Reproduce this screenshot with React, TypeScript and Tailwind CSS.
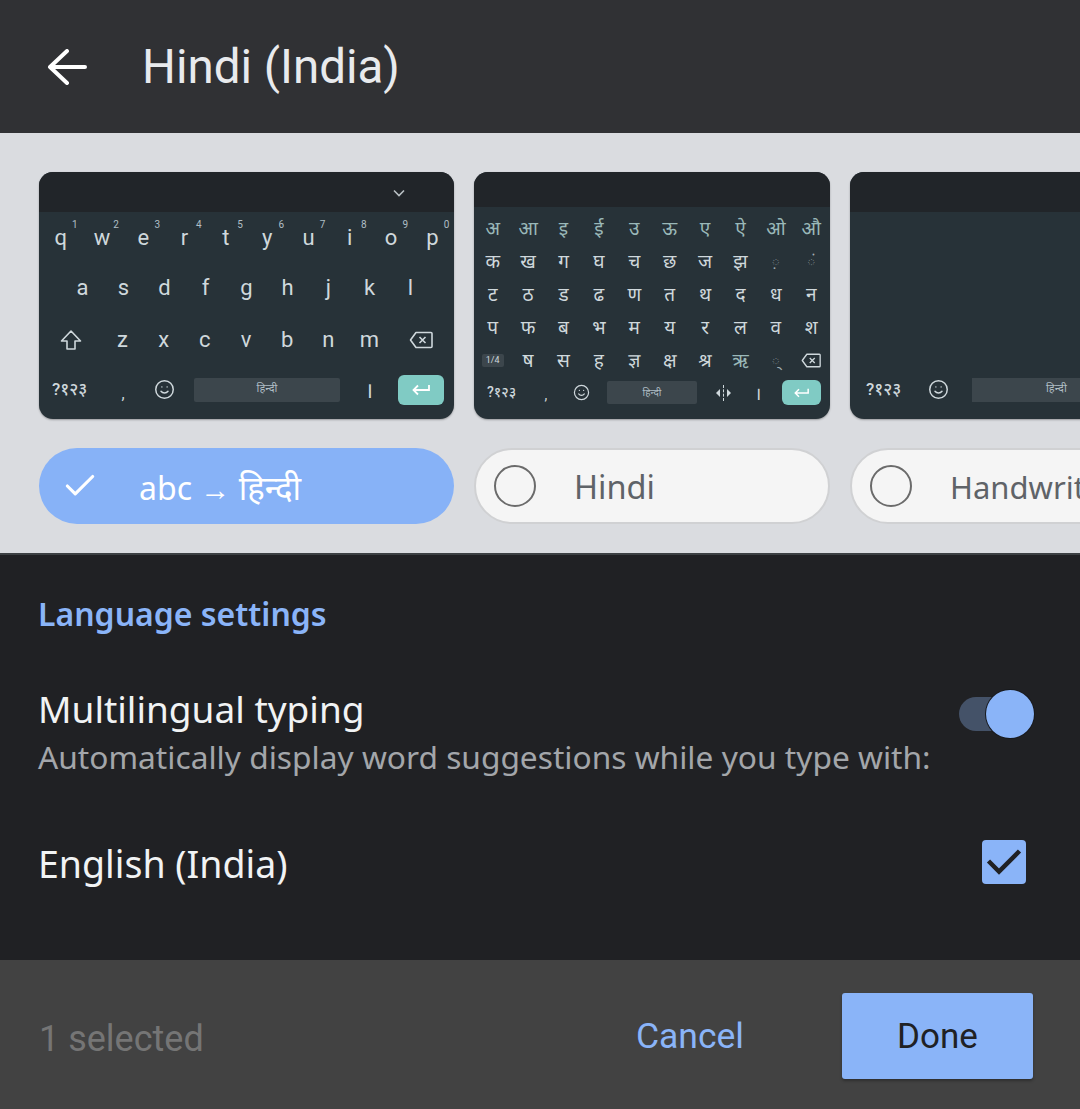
import { Check, Smile } from "lucide-react";

const font = "font-['Noto_Sans','Noto_Sans_Devanagari','Liberation_Sans',sans-serif]";
const roboto = "font-['Roboto','Noto_Sans_Devanagari','Noto_Sans',sans-serif]";
const keyFont = roboto;

function Backspace({ className }: { className: string }) {
  return (
    <svg viewBox="0 0 24 18" fill="none" stroke="currentColor" strokeWidth="1.6" className={className}>
      <path d="M7 1.5h15a1 1 0 0 1 1 1v13a1 1 0 0 1-1 1H7L1.5 9z" strokeLinejoin="round" />
      <path d="M10.5 6l6 6M16.5 6l-6 6" />
    </svg>
  );
}

function Shift() {
  return (
    <svg viewBox="0 0 22 22" fill="none" stroke="currentColor" strokeWidth="1.6" className="w-[22px] h-[22px]">
      <path d="M11 2L1.5 12H7v8h8v-8h5.5z" strokeLinejoin="round" />
    </svg>
  );
}

function Enter({ className }: { className: string }) {
  return (
    <svg viewBox="0 0 18 12" fill="none" stroke="currentColor" strokeWidth="1.8" className={className}>
      <path d="M17 1v5H2M6 1.5L1.5 6 6 10.5" />
    </svg>
  );
}

function LetterKey({ c, sup }: { c: string; sup?: string }) {
  return (
    <div className="relative h-full flex items-center justify-center text-[22px] leading-none text-[#cfd8dc]">
      {c}
      {sup && <span className="absolute left-[32px] top-[7px] text-[10px] text-[#b0bec5]">{sup}</span>}
    </div>
  );
}

function LatinKeyboard() {
  const row1 = "qwertyuiop".split("");
  const sup = "1234567890".split("");
  const row2 = "asdfghjkl".split("");
  const row3 = "zxcvbnm".split("");
  return (
    <div className={`w-[415px] h-[247px] shrink-0 rounded-[14px] bg-[#273238] overflow-hidden flex flex-col shadow-[0_1px_2px_rgba(0,0,0,0.3)] ${keyFont}`}>
      <div className="h-[40px] bg-[#212529] flex items-center justify-end pr-[49px] text-[#b8bfc3]">
        <svg viewBox="0 0 12 8" fill="none" stroke="currentColor" strokeWidth="1.6" className="w-[12px] h-[8px] mt-[2px]">
          <path d="M1 1.5l5 5 5-5" />
        </svg>
      </div>
      <div className="pt-[1px] px-[1px] grid grid-cols-10 h-[50px] w-full">
        {row1.map((c, i) => <LetterKey key={c} c={c} sup={sup[i]} />)}
      </div>
      <div className="px-[23px] grid grid-cols-9 h-[52px]">
        {row2.map((c) => <LetterKey key={c} c={c} />)}
      </div>
      <div className="px-[11px] flex h-[52px] text-[#cfd8dc] items-center">
        <div className="w-[41px] flex justify-center"><Shift /></div>
        <div className="grid grid-cols-7 w-[288px] ml-[11px] h-full">
          {row3.map((c) => <LetterKey key={c} c={c} />)}
        </div>
        <div className="flex-1 flex justify-center pl-[8px]"><Backspace className="w-[24px] h-[18px]" /></div>
      </div>
      <div className="flex items-center h-[47px] text-[#cfd8dc]">
        <span className="w-[49px] pl-[13px] text-[17px] font-medium whitespace-nowrap">?१२३</span>
        <span className="w-[50px] ml-[10px] text-center text-[16px] mt-[8px]">,</span>
        <div className="w-[32px] flex justify-center"><Smile className="w-[21px] h-[21px]" strokeWidth={1.7} /></div>
        <div className="w-[146px] h-[24px] ml-[14px] rounded-[2px] bg-[#3c464c] flex items-center justify-center text-[11px] text-[#b0bec5]">हिन्दी</div>
        <span className="w-[58px] text-center text-[22px] leading-none mt-[3px]">।</span>
        <div className="w-[46px] h-[30px] rounded-[6px] bg-[#80cbc4] flex items-center justify-center text-white">
          <Enter className="w-[18px] h-[12px]" />
        </div>
      </div>
    </div>
  );
}

const hiRows = [
  { keys: "अ आ इ ई उ ऊ ए ऐ ओ औ".split(" "), color: "text-[#9ab8b8]" },
  { keys: "क ख ग घ च छ ज झ ◌़ ◌ं".split(" "), color: "text-[#cfd8dc]" },
  { keys: "ट ठ ड ढ ण त थ द ध न".split(" "), color: "text-[#cfd8dc]" },
  { keys: "प फ ब भ म य र ल व श".split(" "), color: "text-[#cfd8dc]" },
];

function HindiKeyboard() {
  return (
    <div className={`w-[356px] h-[247px] shrink-0 rounded-[14px] bg-[#273238] overflow-hidden flex flex-col shadow-[0_1px_2px_rgba(0,0,0,0.3)] ${keyFont}`}>
      <div className="h-[35px] bg-[#212529]" />
      <div className="pt-[5px] px-[1px]">
        {hiRows.map((r, i) => (
          <div key={i} className={`grid grid-cols-10 h-[33px] text-[19px] leading-none ${r.color}`}>
            {r.keys.map((k) => (
              <div key={k} className={`flex items-center justify-center ${k.startsWith("◌") ? "text-[#a4aeb2] text-[16px]" : ""}`}>{k}</div>
            ))}
          </div>
        ))}
        <div className="grid grid-cols-10 h-[33px] text-[19px] leading-none text-[#cfd8dc]">
          <div className="flex items-center justify-center">
            <span className="w-[22px] h-[13px] rounded-[2px] bg-[#3c464c] text-[9px] flex items-center justify-center">1/4</span>
          </div>
          {"ष स ह ज्ञ क्ष श्र".split(" ").map((k) => (
            <div key={k} className="flex items-center justify-center">{k}</div>
          ))}
          <div className="flex items-center justify-center text-[#9ab8b8]">ऋ</div>
          <div className="flex items-center justify-center text-[#a4aeb2] text-[16px]">◌्</div>
          <div className="flex items-center justify-center"><Backspace className="w-[20px] h-[15px]" /></div>
        </div>
      </div>
      <div className="flex items-center h-[31px] text-[#cfd8dc]">
        <span className="w-[42px] pl-[13px] text-[14px] font-medium whitespace-nowrap">?१२३</span>
        <span className="w-[40px] ml-[10px] text-center text-[14px] mt-[6px]">,</span>
        <div className="w-[30px] flex justify-center"><Smile className="w-[17px] h-[17px]" strokeWidth={1.7} /></div>
        <div className="w-[90px] h-[23px] ml-[11px] rounded-[2px] bg-[#3c464c] flex items-center justify-center text-[10px] text-[#b0bec5]">हिन्दी</div>
        <div className="w-[52px] flex justify-center items-center">
          <span className="w-0 h-0 border-y-[4px] border-y-transparent border-r-[4px] border-r-[#cfd8dc]" />
          <span className="h-[16px] border-l border-dashed border-[#cfd8dc] mx-[3px]" />
          <span className="w-0 h-0 border-y-[4px] border-y-transparent border-l-[4px] border-l-[#cfd8dc]" />
        </div>
        <span className="w-[18px] text-center text-[18px] leading-none mt-[2px]">।</span>
        <div className="w-[39px] h-[25px] ml-[15px] rounded-[6px] bg-[#80cbc4] flex items-center justify-center text-white">
          <Enter className="w-[15px] h-[10px]" />
        </div>
      </div>
    </div>
  );
}

function HandwritingKeyboard() {
  return (
    <div className={`w-[300px] h-[247px] shrink-0 rounded-[14px] bg-[#273238] overflow-hidden flex flex-col shadow-[0_1px_2px_rgba(0,0,0,0.3)] ${keyFont}`}>
      <div className="h-[40px] bg-[#212529]" />
      <div className="flex-1" />
      <div className="flex items-center h-[47px] mb-[6px] text-[#cfd8dc]">
        <span className="w-[49px] pl-[16px] text-[17px] font-medium whitespace-nowrap">?१२३</span>
        <div className="w-[68px] ml-[5px] flex justify-center"><Smile className="w-[21px] h-[21px]" strokeWidth={1.7} /></div>
        <div className="flex-1 h-[24px] bg-[#3c464c] flex items-center pl-[74px] text-[11px] text-[#b0bec5]">हिन्दी</div>
      </div>
    </div>
  );
}

function OffPill({ label, width, size }: { label: string; width: string; size: string }) {
  return (
    <div className={`${width} ${size} h-[76px] shrink-0 rounded-full bg-[#f5f5f5] border-2 border-[#d0d1d3] flex items-center pl-[18px] text-[#5f6368] whitespace-nowrap overflow-hidden`}>
      <span className="w-[42px] h-[42px] rounded-full border-2 border-[#6b6b6b] shrink-0" />
      <span className="ml-[38px] pt-[3px]">{label}</span>
    </div>
  );
}

export default function App() {
  return (
    <div className={`w-[1080px] h-[1109px] flex flex-col overflow-hidden ${font}`}>
      <header className="h-[133px] shrink-0 bg-[#303134] flex items-center pl-[47px] text-[#e8eaed]">
        <svg viewBox="0 0 40 36" fill="none" stroke="currentColor" strokeWidth="4" strokeLinecap="round" strokeLinejoin="round" className="w-[40px] h-[36px] text-white">
          <path d="M38 18H3M20 2L3 18l17 16" />
        </svg>
        <h1 className={`ml-[55px] mt-[3px] text-[47.5px] leading-none font-normal ${roboto}`}>Hindi (India)</h1>
      </header>
      <section className="h-[422px] shrink-0 bg-[#dadce0] pt-[39px] pl-[39px] overflow-hidden border-b-2 border-[#3c4043]">
        <div className="flex gap-[20px]">
          <LatinKeyboard />
          <HindiKeyboard />
          <HandwritingKeyboard />
        </div>
        <div className="flex gap-[20px] mt-[29px]">
          <div className="w-[415px] h-[76px] shrink-0 rounded-full bg-[#87b2f7] flex items-center pl-[22px] text-[32px] text-white">
            <Check className="w-[38px] h-[38px]" strokeWidth={2} />
            <span className="ml-[40px] pt-[3px] whitespace-nowrap">abc <span className="text-[30px]">→</span> <span className="text-[33px]">हिन्दी</span></span>
          </div>
          <OffPill label="Hindi" width="w-[356px]" size="text-[32.5px]" />
          <OffPill label="Handwriting" width="w-[300px]" size="text-[31px]" />
        </div>
      </section>
      <section className="flex-1 bg-[#202124] pl-[39px] pr-[39px] pt-[39px]">
        <h2 className="text-[32px] leading-[40px] font-semibold text-[#8ab4f8] -ml-[1px]">Language settings</h2>
        <div className="mt-[51px] flex items-start justify-between">
          <div className="-ml-[1px]">
            <div className="text-[37px] leading-[48px] text-[#f1f3f4]">Multilingual typing</div>
            <div className="text-[31.7px] leading-[47px] text-[#a3a6aa] whitespace-nowrap">Automatically display word suggestions while you type with:</div>
          </div>
          <div className="relative w-[75px] h-[34px] mt-[12px] mr-[7px] rounded-full bg-[#445268] shrink-0 -ml-[20px]">
            <span className="absolute right-0 -top-[7px] w-[48px] h-[48px] rounded-full bg-[#8ab4f8] shadow-[0_0_0_1px_#17191d]" />
          </div>
        </div>
        <div className="mt-[60px] flex items-center justify-between">
          <div className="text-[37.5px] leading-[48px] text-[#f1f3f4] -ml-[1px]">English (India)</div>
          <div className="w-[44px] h-[44px] mr-[15px] -mt-[4px] rounded-[4px] bg-[#8ab4f8] text-[#202124]">
            <svg viewBox="0 0 44 44" fill="none" stroke="currentColor" strokeWidth="4.5" className="w-[44px] h-[44px]">
              <path d="M6.5 21L17 31.5 37.5 11" />
            </svg>
          </div>
        </div>
      </section>
      <footer className={`h-[149px] shrink-0 bg-[#424242] flex items-center pl-[39px] pr-[47px] ${roboto}`}>
        <span className="text-[36px] text-[#757575] mt-[8px]">1 selected</span>
        <span className="ml-auto text-[35.5px] text-[#8ab4f8] mt-[5px]">Cancel</span>
        <button className="ml-[98px] mt-[2px] w-[191px] h-[86px] pt-[4px] rounded-[3px] bg-[#8ab4f8] text-[35px] text-[#202124] shadow-[0_2px_3px_rgba(0,0,0,0.3)]">Done</button>
      </footer>
    </div>
  );
}
